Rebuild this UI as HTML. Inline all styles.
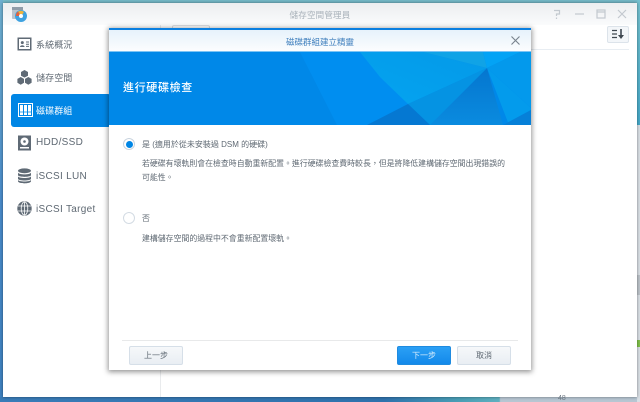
<!DOCTYPE html>
<html lang="zh-Hant">
<head>
<meta charset="utf-8">
<style>
html,body{margin:0;padding:0;width:640px;height:402px;overflow:hidden;background:#3a7cb8;}
body{position:relative;font-family:"Liberation Sans","Noto Sans CJK TC",sans-serif;color:#5c6670;}
.a{position:absolute;white-space:nowrap;}
#win{left:3px;top:3px;width:634px;height:394px;background:#fff;box-shadow:0 0 3px rgba(0,0,0,.45);}
#tb{left:3px;top:3px;width:634px;height:22px;background:linear-gradient(#eceef0,#fafbfc);}
.nav{left:36px;font-size:9px;color:#5f6973;line-height:14px;letter-spacing:.1px;}
.lat{font-size:10px;letter-spacing:.3px;}
.t{left:142px;font-size:7.9px;line-height:13px;color:#5f6973;}
.btn{box-sizing:border-box;height:19px;border:1px solid #d6dfe8;border-radius:2px;background:linear-gradient(#f6f8fa,#e9eef3);font-size:8px;line-height:17px;text-align:center;color:#5f6973;}
</style>
</head>
<body>
<!-- desktop background -->
<div class="a" style="left:0;top:0;width:640px;height:3px;background:#74b9c8"></div>
<div class="a" style="left:0;top:0;width:3px;height:402px;background:linear-gradient(#6fb0d0,#4a8ccb 50%,#3f82c0)"></div>
<div class="a" style="left:0;top:397px;width:640px;height:5px;background:linear-gradient(90deg,#3a7cb8,#2f72ad 60%,#4a9fb5 72%,#5fb0c0 78%,#b7c6d2 78.2%)"></div>
<div class="a" style="left:637px;top:0;width:3px;height:125px;background:linear-gradient(#74c0cf,#45a9c9)"></div>
<div class="a" style="left:637px;top:125px;width:3px;height:277px;background:#d9dfe5"></div>
<div class="a" style="left:637px;top:275px;width:3px;height:20px;background:#bcc3c9"></div>
<div class="a" style="left:637px;top:340px;width:3px;height:7px;background:#7fc04a"></div>

<div class="a" id="win"></div>
<div class="a" id="tb"></div>

<!-- app icon -->
<svg class="a" style="left:11px;top:6px" width="17" height="16" viewBox="0 0 17 16">
<rect x="1" y="1" width="11" height="12" rx="1" fill="#b9c3cc"/>
<rect x="1" y="1" width="11" height="3" fill="#8f9ca8"/>
<circle cx="10" cy="10" r="6" fill="#3ea2e0"/>
<path d="M10 10L7 5.5A5 5 0 0 1 13 6Z" fill="#f0b43c"/>
<path d="M10 10L5 10A5 5 0 0 1 7 5.5Z" fill="#e2603c"/>
<circle cx="10" cy="10" r="2" fill="#fff"/>
</svg>
<div class="a" style="left:0;top:8px;width:640px;text-align:center;font-size:8.5px;line-height:14px;color:#a9b2ba;letter-spacing:.2px">儲存空間管理員</div>

<!-- window controls -->
<svg class="a" style="left:550px;top:6px" width="82" height="16" viewBox="0 0 82 16" fill="none" stroke="#c3c9cf" stroke-width="1.2">
<path d="M4 4.5H9.5V8H6.5V10M6.5 11.5V13"/>
<path d="M25 8H34"/>
<rect x="47" y="4" width="8" height="8"/><path d="M47 6H55"/>
<path d="M68 4L76 12M76 4L68 12"/>
</svg>

<!-- toolbar right -->
<div class="a" style="left:607px;top:26px;box-sizing:border-box;width:22px;height:17px;border:1px solid #dce3ea;border-radius:2px;background:#f3f6f9"></div>
<svg class="a" style="left:611px;top:29px" width="15" height="11" viewBox="0 0 15 11" fill="none" stroke="#3f4850" stroke-width="1.2">
<path d="M1 1.5H6M1 5H6M1 8.5H6"/><path d="M10 0V7" stroke-width="1.6"/><path d="M7 6L10 10L13 6Z" fill="#3f4850" stroke="none"/>
</svg>
<div class="a" style="left:160px;top:49px;width:469px;height:1px;background:#e8edf2"></div>
<div class="a" style="left:172px;top:25px;width:36px;height:3px;border:1px solid #dcdfe3;border-bottom:0;border-radius:2px 2px 0 0"></div>
<div class="a" style="left:160px;top:25px;width:1px;height:372px;background:#e9ebed"></div>

<!-- sidebar -->
<div class="a" style="left:11px;top:94px;width:100px;height:33px;background:#0086e5;border-radius:3px"></div>

<svg class="a" style="left:17px;top:37px" width="15" height="15" viewBox="0 0 15 15">
<rect x="0.5" y="0.5" width="14" height="13" fill="#5f6a75"/>
<rect x="2" y="2" width="11" height="10" fill="#fff"/>
<circle cx="5.3" cy="5.6" r="1.5" fill="#5f6a75"/><path d="M3 10C3 7.6 7.6 7.6 7.6 10Z" fill="#5f6a75"/>
<path d="M9 5H12M9 7.2H12M9 9.4H12" stroke="#5f6a75" stroke-width="1"/>
</svg>
<div class="a nav" style="top:38px">系統概況</div>

<svg class="a" style="left:17px;top:70px" width="15" height="15" viewBox="0 0 15 15" fill="#5f6a75">
<path d="M7.5 0L11 2V5.8L7.5 7.6L4 5.8V2Z"/>
<path d="M3.7 7L7 8.9V12.8L3.7 14.8L0.4 12.8V8.9Z"/>
<path d="M11.3 7L14.6 8.9V12.8L11.3 14.8L8 12.8V8.9Z"/>
</svg>
<div class="a nav" style="top:71px">儲存空間</div>

<svg class="a" style="left:18px;top:103px" width="15" height="14" viewBox="0 0 15 14">
<rect x="0.5" y="0.5" width="14" height="13" fill="none" stroke="#fff"/>
<rect x="2" y="2" width="3" height="10" fill="#fff"/><rect x="6" y="2" width="3" height="10" fill="#fff"/><rect x="10" y="2" width="3" height="10" fill="#fff"/>
<path d="M2 9H5M6 9H9M10 9H13" stroke="#0086e5" stroke-width=".8"/>
</svg>
<div class="a nav" style="top:104px;color:#fff">磁碟群組</div>

<svg class="a" style="left:17px;top:135px" width="15" height="16" viewBox="0 0 15 16">
<rect x="1" y="0.5" width="13" height="15" fill="#5f6a75"/>
<circle cx="7.5" cy="6.5" r="4" fill="#fff"/><circle cx="7.5" cy="6.5" r="1.3" fill="#5f6a75"/>
<rect x="3" y="12" width="9" height="1.5" fill="#fff"/>
</svg>
<div class="a nav lat" style="top:136px">HDD/SSD</div>

<svg class="a" style="left:17px;top:168px" width="15" height="16" viewBox="0 0 15 16" fill="#5f6a75">
<ellipse cx="7.5" cy="2.8" rx="6.5" ry="2.4"/>
<path d="M1 4.6C2 7 13 7 14 4.6V7.3C13 9.4 2 9.4 1 7.3Z"/>
<path d="M1 8.4C2 10.6 13 10.6 14 8.4V11C13 13 2 13 1 11Z"/>
<path d="M1 12C2 14 13 14 14 12V13.4C13 16 2 16 1 13.4Z"/>
</svg>
<div class="a nav lat" style="top:170px">iSCSI LUN</div>

<svg class="a" style="left:17px;top:201px" width="15" height="15" viewBox="0 0 15 15">
<circle cx="7.5" cy="7.5" r="7.2" fill="#5f6a75"/>
<g fill="none" stroke="#fff" stroke-width=".8"><ellipse cx="7.5" cy="7.5" rx="3.3" ry="6.6"/><path d="M7.5 1V14M1 5H14M1 10H14"/></g>
</svg>
<div class="a nav lat" style="top:203px">iSCSI Target</div>

<!-- modal -->
<div class="a" style="left:109px;top:28px;width:422px;height:342px;background:#fff;box-shadow:0 1px 5px 1px rgba(0,0,0,.42)"></div>
<div class="a" style="left:109px;top:28px;width:422px;height:2px;background:#0a7fe0"></div>
<div class="a" style="left:109px;top:30px;width:422px;height:21px;background:linear-gradient(#e6f2fb,#fcfdfe)"></div>
<div class="a" style="left:109px;top:51px;width:422px;height:1px;background:#7cc4f5"></div>
<div class="a" style="left:109px;top:32px;width:422px;height:21px;line-height:20px;text-align:center;font-size:8.5px;color:#3f7fbd">磁碟群組建立精靈</div>
<svg class="a" style="left:510px;top:35px" width="11" height="11" viewBox="0 0 11 11" fill="none" stroke="#77828c" stroke-width="1.1"><path d="M1.5 1.5L9.5 9.5M9.5 1.5L1.5 9.5"/></svg>

<!-- banner -->
<svg class="a" style="left:109px;top:52px" width="422" height="73" viewBox="0 0 422 73">
<defs>
<linearGradient id="g1" x1="0" x2="0" y1="0" y2="1"><stop offset="0" stop-color="#0576cf"/><stop offset="1" stop-color="#0a8bdf"/></linearGradient>
<linearGradient id="g2" x1="1" x2="0" y1="0" y2="1"><stop offset="0" stop-color="#0599e8"/><stop offset="1" stop-color="#03a4f0"/></linearGradient>
</defs>
<rect width="422" height="73" fill="#0088e8"/>
<polygon points="191,0 314,0 299,52 258,73 228,73" fill="#008ef0"/>
<polygon points="251,0 314,0 378,16 299,52 271,25" fill="url(#g2)"/>
<polygon points="314,0 374,0 378,16" fill="#10a3e6"/>
<polygon points="374,0 411,0 378,16" fill="#03a3f5"/>
<polygon points="411,0 422,0 422,56 378,16" fill="#0399ec"/>
<polygon points="378,16 422,56 422,58 394,73 400,73" fill="#039bec"/>
<polygon points="394,73 422,58 422,73" fill="#0680d8"/>
<polygon points="378,16 321,73 394,73" fill="url(#g1)"/>
<polygon points="378,16 299,52 321,73" fill="#0593e3"/>
<polygon points="299,52 321,73 258,73" fill="#0578d2"/>
</svg>
<div class="a" style="left:123px;top:80px;font-size:11px;line-height:16px;color:#fff;letter-spacing:.65px;font-weight:500">進行硬碟檢查</div>

<!-- radios -->
<div class="a" style="left:123px;top:138px;width:12px;height:12px;box-sizing:border-box;border:1px solid #c8d3de;border-radius:50%;background:#fff"></div>
<div class="a" style="left:125.5px;top:140.5px;width:7px;height:7px;border-radius:50%;background:#0086e5"></div>
<div class="a t" style="top:138px;font-size:8px">是 (適用於從未安裝過 DSM 的硬碟)</div>
<div class="a t" style="top:157px">若硬碟有壞軌則會在檢查時自動重新配置。進行硬碟檢查費時較長，但是將降低建構儲存空間出現錯誤的</div>
<div class="a t" style="top:171px">可能性。</div>

<div class="a" style="left:123px;top:212px;width:12px;height:12px;box-sizing:border-box;border:1px solid #d3dbe3;border-radius:50%;background:#fff"></div>
<div class="a t" style="top:212px">否</div>
<div class="a t" style="top:232px">建構儲存空間的過程中不會重新配置壞軌。</div>

<!-- footer -->
<div class="a" style="left:122px;top:340px;width:396px;height:1px;background:#e8e9ea"></div>
<div class="a btn" style="left:129px;top:346px;width:54px">上一步</div>
<div class="a btn" style="left:397px;top:346px;width:54px;border-color:#1f8be0;background:linear-gradient(#2ba0f5,#1389ea);color:#d8edfc">下一步</div>
<div class="a btn" style="left:457px;top:346px;width:54px">取消</div>

<div class="a" style="left:558px;top:395px;font-size:7px;line-height:7px;color:#6a7580">48</div>
</body>
</html>
